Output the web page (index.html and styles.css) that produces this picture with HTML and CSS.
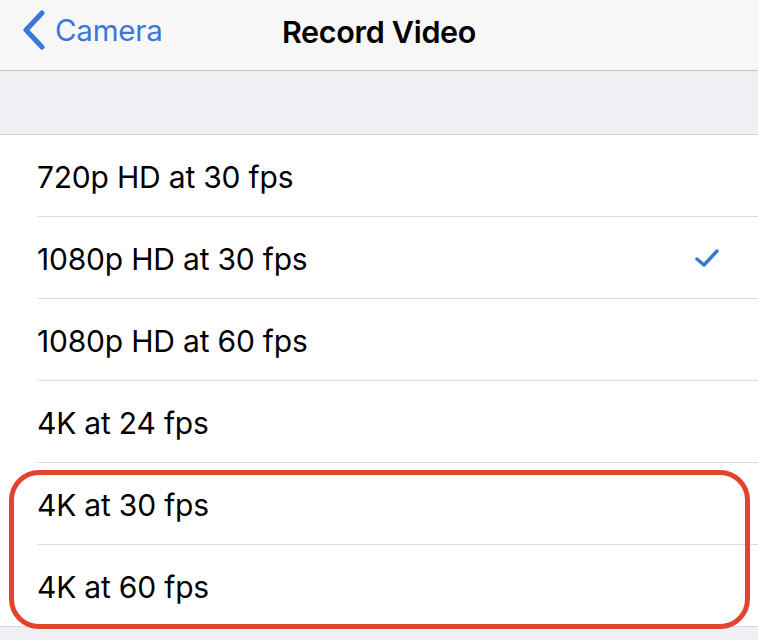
FILE: index.html
```html
<!DOCTYPE html>
<html>
<head>
<meta charset="utf-8">
<link rel="stylesheet" href="styles.css">
</head>
<body>
<div class="nav">
  <div class="back">
    <svg class="chev" width="26" height="40" viewBox="0 0 26 40"><path d="M21 3 L5 20 L21 37" fill="none" stroke="#3a77d8" stroke-width="5" stroke-linecap="round" stroke-linejoin="round"/></svg>
    <span class="back-label">Camera</span>
  </div>
  <div class="title">Record Video</div>
</div>
<div class="spacer"></div>
<div class="list">
  <div class="row"><span>720p HD at 30 fps</span></div>
  <div class="row"><span>1080p HD at 30 fps</span>
    <svg class="check" width="26" height="22" viewBox="0 0 26 22"><path d="M3 12 L10 18 L23 4" fill="none" stroke="#3a77d8" stroke-width="3.5" stroke-linecap="round" stroke-linejoin="round"/></svg>
  </div>
  <div class="row"><span>1080p HD at 60 fps</span></div>
  <div class="row"><span>4K at 24 fps</span></div>
  <div class="row"><span>4K at 30 fps</span></div>
  <div class="row last"><span>4K at 60 fps</span></div>
  <div class="highlight"></div>
</div>
<div class="footer"></div>
</body>
</html>
```
FILE: styles.css
```css
html, body {
  margin: 0;
  padding: 0;
}
body {
  width: 758px;
  height: 640px;
  overflow: hidden;
  background: #efeff4;
  font-family: Inter, "Noto Sans", sans-serif;
  color: #000;
}
.nav {
  height: 70px;
  background: #f7f7f8;
  border-bottom: 1px solid #c3c3c8;
  position: relative;
  display: flex;
  align-items: center;
  justify-content: center;
}
.back {
  position: absolute;
  left: 21px;
  top: 10px;
  display: flex;
  align-items: center;
  gap: 8px;
}
.back-label {
  color: #3a77d8;
  font-size: 29.5px;
  letter-spacing: -0.2px;
}
.title {
  font-size: 30.5px;
  font-weight: 600;
  letter-spacing: -0.3px;
  margin-top: -8px;
}
.spacer {
  height: 63px;
  background: #efeff4;
  border-bottom: 1px solid #cfcfd4;
}
.list {
  background: #fff;
  position: relative;
  border-bottom: 1px solid #d8d8dc;
}
.row {
  height: 82px;
  margin-left: 37px;
  padding-right: 38px;
  border-bottom: 1px solid #dcdce0;
  display: flex;
  align-items: center;
  justify-content: space-between;
  font-size: 30px;
  letter-spacing: -0.2px;
  padding-top: 2px;
  box-sizing: border-box;
}
.row.last {
  border-bottom: none;
  height: 81px;
}
.check {
  margin-top: -2px;
}
.highlight {
  position: absolute;
  left: 9px;
  right: 8px;
  top: 335px;
  bottom: -3px;
  border: 5.5px solid #e2452f;
  border-radius: 30px;
}
.footer {
  height: 20px;
  background: #efeff4;
}
```
